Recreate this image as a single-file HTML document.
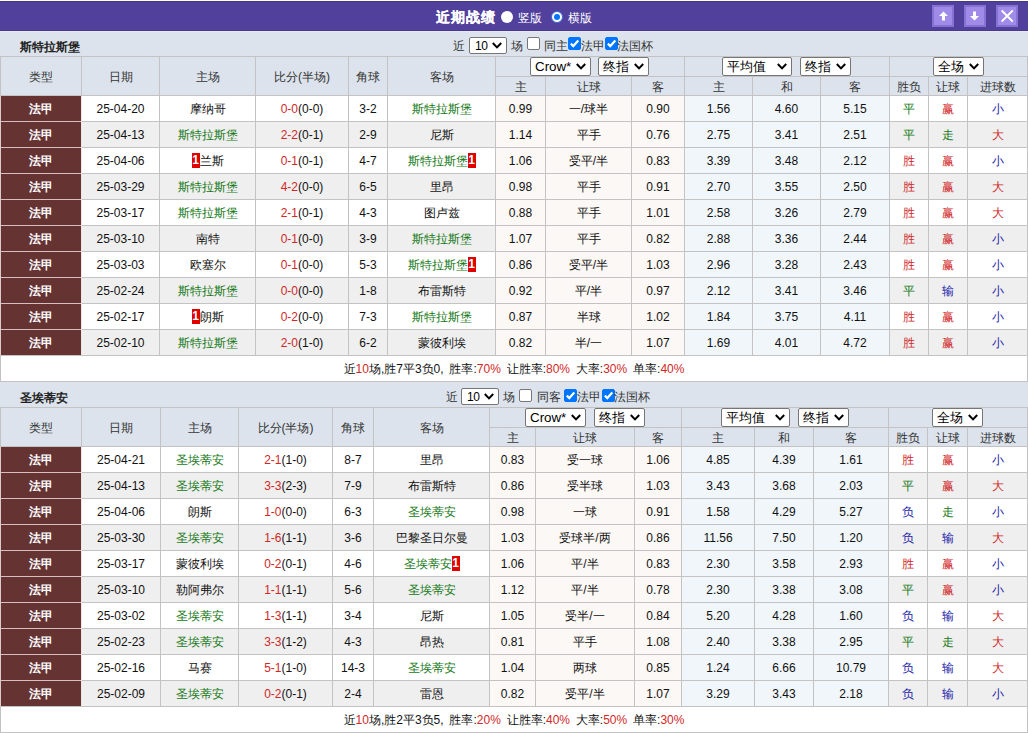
<!DOCTYPE html><html><head><meta charset="utf-8"><style>
*{margin:0;padding:0;box-sizing:border-box}
html,body{width:1028px;height:733px;overflow:hidden;background:#DCE3EC;font-family:"Liberation Sans",sans-serif;font-size:12px;color:#111}
div{position:absolute}
.t{text-align:center;white-space:nowrap;overflow:hidden}
.g{color:#167816} .r{color:#D02828} .b{color:#2222AA}
.bd{display:inline-block;background:#E00000;color:#fff;font-weight:bold;width:8px;height:15px;line-height:15px;text-align:center;vertical-align:middle;font-size:12px;position:relative;top:-1px}
.sel{background:#fff;border:1px solid #767676;border-radius:2px;font-size:13px;color:#000}
.sel .st{position:absolute;left:4px;top:0;line-height:17px;font-size:13.33px}
.sel .chev{position:absolute;top:5px}
.cb{width:13px;height:13px;border:1px solid #767676;border-radius:2px;background:#fff}
.cb.on{background:#0075FF;border-color:#0075FF}
.cb svg{position:absolute;left:-1px;top:-1px}
.tt{color:#fff;font-weight:bold;font-size:14px;line-height:14px;letter-spacing:1px;white-space:nowrap;-webkit-text-stroke:0.2px #fff}
.wt{color:#fff;font-size:12px;line-height:14px;white-space:nowrap}
.rad{width:12px;height:12px;border-radius:50%;background:#fff}
.rad.on{background:#fff;border:1px solid #3A6AE0}
.rad.on:after{content:"";position:absolute;left:2px;top:2px;width:6px;height:6px;border-radius:50%;background:#0075FF}
.btn{width:22px;height:22px;background:#A08CE8;border:2px solid #8672D4}

.team{font-weight:bold;font-size:12px;line-height:14px;color:#222;white-space:nowrap}
.lbl{font-size:12px;line-height:14px;color:#333;white-space:nowrap}
</style></head><body><div style="left:0px;top:0px;width:1028px;height:1px;background:#fff"></div>
<div style="left:0px;top:1px;width:1028px;height:1px;background:#463A7E"></div>
<div style="left:0px;top:2px;width:1028px;height:28px;background:#51409C"></div>
<div style="left:0px;top:30px;width:1028px;height:1px;background:#483B82"></div>
<div style="left:0px;top:31px;width:1028px;height:1px;background:#E6E6FA"></div>
<div class="tt" style="left:436px;top:10px;">近期战绩</div>
<div class="rad" style="left:501px;top:11px;"></div>
<div class="wt" style="left:518px;top:11px;">竖版</div>
<div class="rad on" style="left:551px;top:11px;"></div>
<div class="wt" style="left:568px;top:11px;">横版</div>
<div class="btn" style="left:932px;top:5px;"><svg width="11" height="11" viewBox="0 0 11 11" style="position:absolute;left:4px;top:3px;overflow:visible"><path d="M5.5 1.5 L10 6 L7 6 L7 10.5 L4 10.5 L4 6 L1 6 Z" fill="#fff"/></svg></div>
<div class="btn" style="left:964px;top:5px;"><svg width="11" height="11" viewBox="0 0 11 11" style="position:absolute;left:3px;top:3px;overflow:visible"><path d="M5.5 10.5 L10 6 L7 6 L7 1.5 L4 1.5 L4 6 L1 6 Z" fill="#fff"/></svg></div>
<div class="btn" style="left:996px;top:5px;"><svg width="11" height="11" viewBox="0 0 11 11" style="position:absolute;left:4px;top:3px;overflow:visible"><path d="M-0.3 0.5 L10.7 11.5 M10.7 0.5 L-0.3 11.5" stroke="#fff" stroke-width="1.8"/></svg></div>
<div class="team" style="left:20px;top:40px;">斯特拉斯堡</div>
<div style="left:0px;top:56px;width:1028px;height:39px;background:#DCE3EC"></div>
<div style="left:0px;top:56px;width:1028px;height:1px;background:#C3C3C3"></div>
<div style="left:495px;top:76px;width:532px;height:1px;background:#C3C3C3"></div>
<div style="left:0px;top:95px;width:1028px;height:1px;background:#C3C3C3"></div>
<div style="left:0px;top:56px;width:1px;height:39px;background:#C3C3C3"></div>
<div style="left:81px;top:56px;width:1px;height:39px;background:#C3C3C3"></div>
<div style="left:159px;top:56px;width:1px;height:39px;background:#C3C3C3"></div>
<div style="left:255px;top:56px;width:1px;height:39px;background:#C3C3C3"></div>
<div style="left:348px;top:56px;width:1px;height:39px;background:#C3C3C3"></div>
<div style="left:387px;top:56px;width:1px;height:39px;background:#C3C3C3"></div>
<div style="left:495px;top:56px;width:1px;height:39px;background:#C3C3C3"></div>
<div style="left:545px;top:76px;width:1px;height:19px;background:#C3C3C3"></div>
<div style="left:631px;top:76px;width:1px;height:19px;background:#C3C3C3"></div>
<div style="left:684px;top:56px;width:1px;height:39px;background:#C3C3C3"></div>
<div style="left:752px;top:76px;width:1px;height:19px;background:#C3C3C3"></div>
<div style="left:820px;top:76px;width:1px;height:19px;background:#C3C3C3"></div>
<div style="left:889px;top:56px;width:1px;height:39px;background:#C3C3C3"></div>
<div style="left:928px;top:76px;width:1px;height:19px;background:#C3C3C3"></div>
<div style="left:967px;top:76px;width:1px;height:19px;background:#C3C3C3"></div>
<div style="left:1027px;top:56px;width:1px;height:39px;background:#C3C3C3"></div>
<div class="t" style="left:1px;top:58px;width:80px;height:38px;line-height:38px;color:#333">类型</div>
<div class="t" style="left:82px;top:58px;width:77px;height:38px;line-height:38px;color:#333">日期</div>
<div class="t" style="left:160px;top:58px;width:95px;height:38px;line-height:38px;color:#333">主场</div>
<div class="t" style="left:256px;top:58px;width:92px;height:38px;line-height:38px;color:#333">比分(半场)</div>
<div class="t" style="left:349px;top:58px;width:38px;height:38px;line-height:38px;color:#333">角球</div>
<div class="t" style="left:388px;top:58px;width:107px;height:38px;line-height:38px;color:#333">客场</div>
<div class="t" style="left:496px;top:78px;width:49px;height:18px;line-height:18px;color:#333">主</div>
<div class="t" style="left:546px;top:78px;width:85px;height:18px;line-height:18px;color:#333">让球</div>
<div class="t" style="left:632px;top:78px;width:52px;height:18px;line-height:18px;color:#333">客</div>
<div class="t" style="left:685px;top:78px;width:67px;height:18px;line-height:18px;color:#333">主</div>
<div class="t" style="left:753px;top:78px;width:67px;height:18px;line-height:18px;color:#333">和</div>
<div class="t" style="left:821px;top:78px;width:68px;height:18px;line-height:18px;color:#333">客</div>
<div class="t" style="left:890px;top:78px;width:38px;height:18px;line-height:18px;color:#333">胜负</div>
<div class="t" style="left:929px;top:78px;width:38px;height:18px;line-height:18px;color:#333">让球</div>
<div class="t" style="left:968px;top:78px;width:59px;height:18px;line-height:18px;color:#333">进球数</div>
<div class="sel" style="left:530px;top:57px;width:61px;height:19px;"><span class="st">Crow*</span><svg class="chev" width="10" height="7" viewBox="0 0 10 7" style="left:45px"><path d="M0.8 1 L5 5.4 L9.2 1" stroke="#000" stroke-width="2" fill="none"/></svg></div>
<div class="sel" style="left:598px;top:57px;width:51px;height:19px;"><span class="st">终指</span><svg class="chev" width="10" height="7" viewBox="0 0 10 7" style="left:35px"><path d="M0.8 1 L5 5.4 L9.2 1" stroke="#000" stroke-width="2" fill="none"/></svg></div>
<div class="sel" style="left:722px;top:57px;width:70px;height:19px;"><span class="st">平均值</span><svg class="chev" width="10" height="7" viewBox="0 0 10 7" style="left:54px"><path d="M0.8 1 L5 5.4 L9.2 1" stroke="#000" stroke-width="2" fill="none"/></svg></div>
<div class="sel" style="left:800px;top:57px;width:51px;height:19px;"><span class="st">终指</span><svg class="chev" width="10" height="7" viewBox="0 0 10 7" style="left:35px"><path d="M0.8 1 L5 5.4 L9.2 1" stroke="#000" stroke-width="2" fill="none"/></svg></div>
<div class="sel" style="left:933px;top:57px;width:51px;height:19px;"><span class="st">全场</span><svg class="chev" width="10" height="7" viewBox="0 0 10 7" style="left:35px"><path d="M0.8 1 L5 5.4 L9.2 1" stroke="#000" stroke-width="2" fill="none"/></svg></div>
<div style="left:1px;top:96px;width:80px;height:25px;background:#663333"></div>
<div class="t" style="left:1px;top:97px;width:80px;height:25px;line-height:25px;color:#fff;font-weight:bold">法甲</div>
<div style="left:82px;top:96px;width:77px;height:25px;background:#FFFFFF"></div>
<div class="t" style="left:82px;top:97px;width:77px;height:25px;line-height:25px;">25-04-20</div>
<div style="left:160px;top:96px;width:95px;height:25px;background:#FFFFFF"></div>
<div class="t" style="left:160px;top:97px;width:95px;height:25px;line-height:25px;">摩纳哥</div>
<div style="left:256px;top:96px;width:92px;height:25px;background:#FFFFFF"></div>
<div class="t" style="left:256px;top:97px;width:92px;height:25px;line-height:25px;"><span class="r">0-0</span>(0-0)</div>
<div style="left:349px;top:96px;width:38px;height:25px;background:#FFFFFF"></div>
<div class="t" style="left:349px;top:97px;width:38px;height:25px;line-height:25px;">3-2</div>
<div style="left:388px;top:96px;width:107px;height:25px;background:#FFFFFF"></div>
<div class="t" style="left:388px;top:97px;width:107px;height:25px;line-height:25px;"><span class="g">斯特拉斯堡</span></div>
<div style="left:496px;top:96px;width:49px;height:25px;background:#FCF8F5"></div>
<div class="t" style="left:496px;top:97px;width:49px;height:25px;line-height:25px;">0.99</div>
<div style="left:546px;top:96px;width:85px;height:25px;background:#FCF8F5"></div>
<div class="t" style="left:546px;top:97px;width:85px;height:25px;line-height:25px;">一/球半</div>
<div style="left:632px;top:96px;width:52px;height:25px;background:#FCF8F5"></div>
<div class="t" style="left:632px;top:97px;width:52px;height:25px;line-height:25px;">0.90</div>
<div style="left:685px;top:96px;width:67px;height:25px;background:#F0F6FA"></div>
<div class="t" style="left:685px;top:97px;width:67px;height:25px;line-height:25px;">1.56</div>
<div style="left:753px;top:96px;width:67px;height:25px;background:#F0F6FA"></div>
<div class="t" style="left:753px;top:97px;width:67px;height:25px;line-height:25px;">4.60</div>
<div style="left:821px;top:96px;width:68px;height:25px;background:#F0F6FA"></div>
<div class="t" style="left:821px;top:97px;width:68px;height:25px;line-height:25px;">5.15</div>
<div style="left:890px;top:96px;width:38px;height:25px;background:#FFFFFF"></div>
<div class="t" style="left:890px;top:97px;width:38px;height:25px;line-height:25px;"><span class="g">平</span></div>
<div style="left:929px;top:96px;width:38px;height:25px;background:#FFFFFF"></div>
<div class="t" style="left:929px;top:97px;width:38px;height:25px;line-height:25px;"><span class="r">赢</span></div>
<div style="left:968px;top:96px;width:59px;height:25px;background:#FFFFFF"></div>
<div class="t" style="left:968px;top:97px;width:59px;height:25px;line-height:25px;"><span class="b">小</span></div>
<div style="left:0px;top:121px;width:1028px;height:1px;background:#C3C3C3"></div>
<div style="left:1px;top:122px;width:80px;height:25px;background:#663333"></div>
<div class="t" style="left:1px;top:123px;width:80px;height:25px;line-height:25px;color:#fff;font-weight:bold">法甲</div>
<div style="left:82px;top:122px;width:77px;height:25px;background:#EFEFEF"></div>
<div class="t" style="left:82px;top:123px;width:77px;height:25px;line-height:25px;">25-04-13</div>
<div style="left:160px;top:122px;width:95px;height:25px;background:#EFEFEF"></div>
<div class="t" style="left:160px;top:123px;width:95px;height:25px;line-height:25px;"><span class="g">斯特拉斯堡</span></div>
<div style="left:256px;top:122px;width:92px;height:25px;background:#EFEFEF"></div>
<div class="t" style="left:256px;top:123px;width:92px;height:25px;line-height:25px;"><span class="r">2-2</span>(0-1)</div>
<div style="left:349px;top:122px;width:38px;height:25px;background:#EFEFEF"></div>
<div class="t" style="left:349px;top:123px;width:38px;height:25px;line-height:25px;">2-9</div>
<div style="left:388px;top:122px;width:107px;height:25px;background:#EFEFEF"></div>
<div class="t" style="left:388px;top:123px;width:107px;height:25px;line-height:25px;">尼斯</div>
<div style="left:496px;top:122px;width:49px;height:25px;background:#FCF8F5"></div>
<div class="t" style="left:496px;top:123px;width:49px;height:25px;line-height:25px;">1.14</div>
<div style="left:546px;top:122px;width:85px;height:25px;background:#FCF8F5"></div>
<div class="t" style="left:546px;top:123px;width:85px;height:25px;line-height:25px;">平手</div>
<div style="left:632px;top:122px;width:52px;height:25px;background:#FCF8F5"></div>
<div class="t" style="left:632px;top:123px;width:52px;height:25px;line-height:25px;">0.76</div>
<div style="left:685px;top:122px;width:67px;height:25px;background:#F0F6FA"></div>
<div class="t" style="left:685px;top:123px;width:67px;height:25px;line-height:25px;">2.75</div>
<div style="left:753px;top:122px;width:67px;height:25px;background:#F0F6FA"></div>
<div class="t" style="left:753px;top:123px;width:67px;height:25px;line-height:25px;">3.41</div>
<div style="left:821px;top:122px;width:68px;height:25px;background:#F0F6FA"></div>
<div class="t" style="left:821px;top:123px;width:68px;height:25px;line-height:25px;">2.51</div>
<div style="left:890px;top:122px;width:38px;height:25px;background:#EFEFEF"></div>
<div class="t" style="left:890px;top:123px;width:38px;height:25px;line-height:25px;"><span class="g">平</span></div>
<div style="left:929px;top:122px;width:38px;height:25px;background:#EFEFEF"></div>
<div class="t" style="left:929px;top:123px;width:38px;height:25px;line-height:25px;"><span class="g">走</span></div>
<div style="left:968px;top:122px;width:59px;height:25px;background:#EFEFEF"></div>
<div class="t" style="left:968px;top:123px;width:59px;height:25px;line-height:25px;"><span class="r">大</span></div>
<div style="left:0px;top:147px;width:1028px;height:1px;background:#C3C3C3"></div>
<div style="left:1px;top:148px;width:80px;height:25px;background:#663333"></div>
<div class="t" style="left:1px;top:149px;width:80px;height:25px;line-height:25px;color:#fff;font-weight:bold">法甲</div>
<div style="left:82px;top:148px;width:77px;height:25px;background:#FFFFFF"></div>
<div class="t" style="left:82px;top:149px;width:77px;height:25px;line-height:25px;">25-04-06</div>
<div style="left:160px;top:148px;width:95px;height:25px;background:#FFFFFF"></div>
<div class="t" style="left:160px;top:149px;width:95px;height:25px;line-height:25px;"><span class="bd">1</span>兰斯</div>
<div style="left:256px;top:148px;width:92px;height:25px;background:#FFFFFF"></div>
<div class="t" style="left:256px;top:149px;width:92px;height:25px;line-height:25px;"><span class="r">0-1</span>(0-1)</div>
<div style="left:349px;top:148px;width:38px;height:25px;background:#FFFFFF"></div>
<div class="t" style="left:349px;top:149px;width:38px;height:25px;line-height:25px;">4-7</div>
<div style="left:388px;top:148px;width:107px;height:25px;background:#FFFFFF"></div>
<div class="t" style="left:388px;top:149px;width:107px;height:25px;line-height:25px;"><span class="g">斯特拉斯堡</span><span class="bd">1</span></div>
<div style="left:496px;top:148px;width:49px;height:25px;background:#FCF8F5"></div>
<div class="t" style="left:496px;top:149px;width:49px;height:25px;line-height:25px;">1.06</div>
<div style="left:546px;top:148px;width:85px;height:25px;background:#FCF8F5"></div>
<div class="t" style="left:546px;top:149px;width:85px;height:25px;line-height:25px;">受平/半</div>
<div style="left:632px;top:148px;width:52px;height:25px;background:#FCF8F5"></div>
<div class="t" style="left:632px;top:149px;width:52px;height:25px;line-height:25px;">0.83</div>
<div style="left:685px;top:148px;width:67px;height:25px;background:#F0F6FA"></div>
<div class="t" style="left:685px;top:149px;width:67px;height:25px;line-height:25px;">3.39</div>
<div style="left:753px;top:148px;width:67px;height:25px;background:#F0F6FA"></div>
<div class="t" style="left:753px;top:149px;width:67px;height:25px;line-height:25px;">3.48</div>
<div style="left:821px;top:148px;width:68px;height:25px;background:#F0F6FA"></div>
<div class="t" style="left:821px;top:149px;width:68px;height:25px;line-height:25px;">2.12</div>
<div style="left:890px;top:148px;width:38px;height:25px;background:#FFFFFF"></div>
<div class="t" style="left:890px;top:149px;width:38px;height:25px;line-height:25px;"><span class="r">胜</span></div>
<div style="left:929px;top:148px;width:38px;height:25px;background:#FFFFFF"></div>
<div class="t" style="left:929px;top:149px;width:38px;height:25px;line-height:25px;"><span class="r">赢</span></div>
<div style="left:968px;top:148px;width:59px;height:25px;background:#FFFFFF"></div>
<div class="t" style="left:968px;top:149px;width:59px;height:25px;line-height:25px;"><span class="b">小</span></div>
<div style="left:0px;top:173px;width:1028px;height:1px;background:#C3C3C3"></div>
<div style="left:1px;top:174px;width:80px;height:25px;background:#663333"></div>
<div class="t" style="left:1px;top:175px;width:80px;height:25px;line-height:25px;color:#fff;font-weight:bold">法甲</div>
<div style="left:82px;top:174px;width:77px;height:25px;background:#EFEFEF"></div>
<div class="t" style="left:82px;top:175px;width:77px;height:25px;line-height:25px;">25-03-29</div>
<div style="left:160px;top:174px;width:95px;height:25px;background:#EFEFEF"></div>
<div class="t" style="left:160px;top:175px;width:95px;height:25px;line-height:25px;"><span class="g">斯特拉斯堡</span></div>
<div style="left:256px;top:174px;width:92px;height:25px;background:#EFEFEF"></div>
<div class="t" style="left:256px;top:175px;width:92px;height:25px;line-height:25px;"><span class="r">4-2</span>(0-0)</div>
<div style="left:349px;top:174px;width:38px;height:25px;background:#EFEFEF"></div>
<div class="t" style="left:349px;top:175px;width:38px;height:25px;line-height:25px;">6-5</div>
<div style="left:388px;top:174px;width:107px;height:25px;background:#EFEFEF"></div>
<div class="t" style="left:388px;top:175px;width:107px;height:25px;line-height:25px;">里昂</div>
<div style="left:496px;top:174px;width:49px;height:25px;background:#FCF8F5"></div>
<div class="t" style="left:496px;top:175px;width:49px;height:25px;line-height:25px;">0.98</div>
<div style="left:546px;top:174px;width:85px;height:25px;background:#FCF8F5"></div>
<div class="t" style="left:546px;top:175px;width:85px;height:25px;line-height:25px;">平手</div>
<div style="left:632px;top:174px;width:52px;height:25px;background:#FCF8F5"></div>
<div class="t" style="left:632px;top:175px;width:52px;height:25px;line-height:25px;">0.91</div>
<div style="left:685px;top:174px;width:67px;height:25px;background:#F0F6FA"></div>
<div class="t" style="left:685px;top:175px;width:67px;height:25px;line-height:25px;">2.70</div>
<div style="left:753px;top:174px;width:67px;height:25px;background:#F0F6FA"></div>
<div class="t" style="left:753px;top:175px;width:67px;height:25px;line-height:25px;">3.55</div>
<div style="left:821px;top:174px;width:68px;height:25px;background:#F0F6FA"></div>
<div class="t" style="left:821px;top:175px;width:68px;height:25px;line-height:25px;">2.50</div>
<div style="left:890px;top:174px;width:38px;height:25px;background:#EFEFEF"></div>
<div class="t" style="left:890px;top:175px;width:38px;height:25px;line-height:25px;"><span class="r">胜</span></div>
<div style="left:929px;top:174px;width:38px;height:25px;background:#EFEFEF"></div>
<div class="t" style="left:929px;top:175px;width:38px;height:25px;line-height:25px;"><span class="r">赢</span></div>
<div style="left:968px;top:174px;width:59px;height:25px;background:#EFEFEF"></div>
<div class="t" style="left:968px;top:175px;width:59px;height:25px;line-height:25px;"><span class="r">大</span></div>
<div style="left:0px;top:199px;width:1028px;height:1px;background:#C3C3C3"></div>
<div style="left:1px;top:200px;width:80px;height:25px;background:#663333"></div>
<div class="t" style="left:1px;top:201px;width:80px;height:25px;line-height:25px;color:#fff;font-weight:bold">法甲</div>
<div style="left:82px;top:200px;width:77px;height:25px;background:#FFFFFF"></div>
<div class="t" style="left:82px;top:201px;width:77px;height:25px;line-height:25px;">25-03-17</div>
<div style="left:160px;top:200px;width:95px;height:25px;background:#FFFFFF"></div>
<div class="t" style="left:160px;top:201px;width:95px;height:25px;line-height:25px;"><span class="g">斯特拉斯堡</span></div>
<div style="left:256px;top:200px;width:92px;height:25px;background:#FFFFFF"></div>
<div class="t" style="left:256px;top:201px;width:92px;height:25px;line-height:25px;"><span class="r">2-1</span>(0-1)</div>
<div style="left:349px;top:200px;width:38px;height:25px;background:#FFFFFF"></div>
<div class="t" style="left:349px;top:201px;width:38px;height:25px;line-height:25px;">4-3</div>
<div style="left:388px;top:200px;width:107px;height:25px;background:#FFFFFF"></div>
<div class="t" style="left:388px;top:201px;width:107px;height:25px;line-height:25px;">图卢兹</div>
<div style="left:496px;top:200px;width:49px;height:25px;background:#FCF8F5"></div>
<div class="t" style="left:496px;top:201px;width:49px;height:25px;line-height:25px;">0.88</div>
<div style="left:546px;top:200px;width:85px;height:25px;background:#FCF8F5"></div>
<div class="t" style="left:546px;top:201px;width:85px;height:25px;line-height:25px;">平手</div>
<div style="left:632px;top:200px;width:52px;height:25px;background:#FCF8F5"></div>
<div class="t" style="left:632px;top:201px;width:52px;height:25px;line-height:25px;">1.01</div>
<div style="left:685px;top:200px;width:67px;height:25px;background:#F0F6FA"></div>
<div class="t" style="left:685px;top:201px;width:67px;height:25px;line-height:25px;">2.58</div>
<div style="left:753px;top:200px;width:67px;height:25px;background:#F0F6FA"></div>
<div class="t" style="left:753px;top:201px;width:67px;height:25px;line-height:25px;">3.26</div>
<div style="left:821px;top:200px;width:68px;height:25px;background:#F0F6FA"></div>
<div class="t" style="left:821px;top:201px;width:68px;height:25px;line-height:25px;">2.79</div>
<div style="left:890px;top:200px;width:38px;height:25px;background:#FFFFFF"></div>
<div class="t" style="left:890px;top:201px;width:38px;height:25px;line-height:25px;"><span class="r">胜</span></div>
<div style="left:929px;top:200px;width:38px;height:25px;background:#FFFFFF"></div>
<div class="t" style="left:929px;top:201px;width:38px;height:25px;line-height:25px;"><span class="r">赢</span></div>
<div style="left:968px;top:200px;width:59px;height:25px;background:#FFFFFF"></div>
<div class="t" style="left:968px;top:201px;width:59px;height:25px;line-height:25px;"><span class="r">大</span></div>
<div style="left:0px;top:225px;width:1028px;height:1px;background:#C3C3C3"></div>
<div style="left:1px;top:226px;width:80px;height:25px;background:#663333"></div>
<div class="t" style="left:1px;top:227px;width:80px;height:25px;line-height:25px;color:#fff;font-weight:bold">法甲</div>
<div style="left:82px;top:226px;width:77px;height:25px;background:#EFEFEF"></div>
<div class="t" style="left:82px;top:227px;width:77px;height:25px;line-height:25px;">25-03-10</div>
<div style="left:160px;top:226px;width:95px;height:25px;background:#EFEFEF"></div>
<div class="t" style="left:160px;top:227px;width:95px;height:25px;line-height:25px;">南特</div>
<div style="left:256px;top:226px;width:92px;height:25px;background:#EFEFEF"></div>
<div class="t" style="left:256px;top:227px;width:92px;height:25px;line-height:25px;"><span class="r">0-1</span>(0-0)</div>
<div style="left:349px;top:226px;width:38px;height:25px;background:#EFEFEF"></div>
<div class="t" style="left:349px;top:227px;width:38px;height:25px;line-height:25px;">3-9</div>
<div style="left:388px;top:226px;width:107px;height:25px;background:#EFEFEF"></div>
<div class="t" style="left:388px;top:227px;width:107px;height:25px;line-height:25px;"><span class="g">斯特拉斯堡</span></div>
<div style="left:496px;top:226px;width:49px;height:25px;background:#FCF8F5"></div>
<div class="t" style="left:496px;top:227px;width:49px;height:25px;line-height:25px;">1.07</div>
<div style="left:546px;top:226px;width:85px;height:25px;background:#FCF8F5"></div>
<div class="t" style="left:546px;top:227px;width:85px;height:25px;line-height:25px;">平手</div>
<div style="left:632px;top:226px;width:52px;height:25px;background:#FCF8F5"></div>
<div class="t" style="left:632px;top:227px;width:52px;height:25px;line-height:25px;">0.82</div>
<div style="left:685px;top:226px;width:67px;height:25px;background:#F0F6FA"></div>
<div class="t" style="left:685px;top:227px;width:67px;height:25px;line-height:25px;">2.88</div>
<div style="left:753px;top:226px;width:67px;height:25px;background:#F0F6FA"></div>
<div class="t" style="left:753px;top:227px;width:67px;height:25px;line-height:25px;">3.36</div>
<div style="left:821px;top:226px;width:68px;height:25px;background:#F0F6FA"></div>
<div class="t" style="left:821px;top:227px;width:68px;height:25px;line-height:25px;">2.44</div>
<div style="left:890px;top:226px;width:38px;height:25px;background:#EFEFEF"></div>
<div class="t" style="left:890px;top:227px;width:38px;height:25px;line-height:25px;"><span class="r">胜</span></div>
<div style="left:929px;top:226px;width:38px;height:25px;background:#EFEFEF"></div>
<div class="t" style="left:929px;top:227px;width:38px;height:25px;line-height:25px;"><span class="r">赢</span></div>
<div style="left:968px;top:226px;width:59px;height:25px;background:#EFEFEF"></div>
<div class="t" style="left:968px;top:227px;width:59px;height:25px;line-height:25px;"><span class="b">小</span></div>
<div style="left:0px;top:251px;width:1028px;height:1px;background:#C3C3C3"></div>
<div style="left:1px;top:252px;width:80px;height:25px;background:#663333"></div>
<div class="t" style="left:1px;top:253px;width:80px;height:25px;line-height:25px;color:#fff;font-weight:bold">法甲</div>
<div style="left:82px;top:252px;width:77px;height:25px;background:#FFFFFF"></div>
<div class="t" style="left:82px;top:253px;width:77px;height:25px;line-height:25px;">25-03-03</div>
<div style="left:160px;top:252px;width:95px;height:25px;background:#FFFFFF"></div>
<div class="t" style="left:160px;top:253px;width:95px;height:25px;line-height:25px;">欧塞尔</div>
<div style="left:256px;top:252px;width:92px;height:25px;background:#FFFFFF"></div>
<div class="t" style="left:256px;top:253px;width:92px;height:25px;line-height:25px;"><span class="r">0-1</span>(0-0)</div>
<div style="left:349px;top:252px;width:38px;height:25px;background:#FFFFFF"></div>
<div class="t" style="left:349px;top:253px;width:38px;height:25px;line-height:25px;">5-3</div>
<div style="left:388px;top:252px;width:107px;height:25px;background:#FFFFFF"></div>
<div class="t" style="left:388px;top:253px;width:107px;height:25px;line-height:25px;"><span class="g">斯特拉斯堡</span><span class="bd">1</span></div>
<div style="left:496px;top:252px;width:49px;height:25px;background:#FCF8F5"></div>
<div class="t" style="left:496px;top:253px;width:49px;height:25px;line-height:25px;">0.86</div>
<div style="left:546px;top:252px;width:85px;height:25px;background:#FCF8F5"></div>
<div class="t" style="left:546px;top:253px;width:85px;height:25px;line-height:25px;">受平/半</div>
<div style="left:632px;top:252px;width:52px;height:25px;background:#FCF8F5"></div>
<div class="t" style="left:632px;top:253px;width:52px;height:25px;line-height:25px;">1.03</div>
<div style="left:685px;top:252px;width:67px;height:25px;background:#F0F6FA"></div>
<div class="t" style="left:685px;top:253px;width:67px;height:25px;line-height:25px;">2.96</div>
<div style="left:753px;top:252px;width:67px;height:25px;background:#F0F6FA"></div>
<div class="t" style="left:753px;top:253px;width:67px;height:25px;line-height:25px;">3.28</div>
<div style="left:821px;top:252px;width:68px;height:25px;background:#F0F6FA"></div>
<div class="t" style="left:821px;top:253px;width:68px;height:25px;line-height:25px;">2.43</div>
<div style="left:890px;top:252px;width:38px;height:25px;background:#FFFFFF"></div>
<div class="t" style="left:890px;top:253px;width:38px;height:25px;line-height:25px;"><span class="r">胜</span></div>
<div style="left:929px;top:252px;width:38px;height:25px;background:#FFFFFF"></div>
<div class="t" style="left:929px;top:253px;width:38px;height:25px;line-height:25px;"><span class="r">赢</span></div>
<div style="left:968px;top:252px;width:59px;height:25px;background:#FFFFFF"></div>
<div class="t" style="left:968px;top:253px;width:59px;height:25px;line-height:25px;"><span class="b">小</span></div>
<div style="left:0px;top:277px;width:1028px;height:1px;background:#C3C3C3"></div>
<div style="left:1px;top:278px;width:80px;height:25px;background:#663333"></div>
<div class="t" style="left:1px;top:279px;width:80px;height:25px;line-height:25px;color:#fff;font-weight:bold">法甲</div>
<div style="left:82px;top:278px;width:77px;height:25px;background:#EFEFEF"></div>
<div class="t" style="left:82px;top:279px;width:77px;height:25px;line-height:25px;">25-02-24</div>
<div style="left:160px;top:278px;width:95px;height:25px;background:#EFEFEF"></div>
<div class="t" style="left:160px;top:279px;width:95px;height:25px;line-height:25px;"><span class="g">斯特拉斯堡</span></div>
<div style="left:256px;top:278px;width:92px;height:25px;background:#EFEFEF"></div>
<div class="t" style="left:256px;top:279px;width:92px;height:25px;line-height:25px;"><span class="r">0-0</span>(0-0)</div>
<div style="left:349px;top:278px;width:38px;height:25px;background:#EFEFEF"></div>
<div class="t" style="left:349px;top:279px;width:38px;height:25px;line-height:25px;">1-8</div>
<div style="left:388px;top:278px;width:107px;height:25px;background:#EFEFEF"></div>
<div class="t" style="left:388px;top:279px;width:107px;height:25px;line-height:25px;">布雷斯特</div>
<div style="left:496px;top:278px;width:49px;height:25px;background:#FCF8F5"></div>
<div class="t" style="left:496px;top:279px;width:49px;height:25px;line-height:25px;">0.92</div>
<div style="left:546px;top:278px;width:85px;height:25px;background:#FCF8F5"></div>
<div class="t" style="left:546px;top:279px;width:85px;height:25px;line-height:25px;">平/半</div>
<div style="left:632px;top:278px;width:52px;height:25px;background:#FCF8F5"></div>
<div class="t" style="left:632px;top:279px;width:52px;height:25px;line-height:25px;">0.97</div>
<div style="left:685px;top:278px;width:67px;height:25px;background:#F0F6FA"></div>
<div class="t" style="left:685px;top:279px;width:67px;height:25px;line-height:25px;">2.12</div>
<div style="left:753px;top:278px;width:67px;height:25px;background:#F0F6FA"></div>
<div class="t" style="left:753px;top:279px;width:67px;height:25px;line-height:25px;">3.41</div>
<div style="left:821px;top:278px;width:68px;height:25px;background:#F0F6FA"></div>
<div class="t" style="left:821px;top:279px;width:68px;height:25px;line-height:25px;">3.46</div>
<div style="left:890px;top:278px;width:38px;height:25px;background:#EFEFEF"></div>
<div class="t" style="left:890px;top:279px;width:38px;height:25px;line-height:25px;"><span class="g">平</span></div>
<div style="left:929px;top:278px;width:38px;height:25px;background:#EFEFEF"></div>
<div class="t" style="left:929px;top:279px;width:38px;height:25px;line-height:25px;"><span class="b">输</span></div>
<div style="left:968px;top:278px;width:59px;height:25px;background:#EFEFEF"></div>
<div class="t" style="left:968px;top:279px;width:59px;height:25px;line-height:25px;"><span class="b">小</span></div>
<div style="left:0px;top:303px;width:1028px;height:1px;background:#C3C3C3"></div>
<div style="left:1px;top:304px;width:80px;height:25px;background:#663333"></div>
<div class="t" style="left:1px;top:305px;width:80px;height:25px;line-height:25px;color:#fff;font-weight:bold">法甲</div>
<div style="left:82px;top:304px;width:77px;height:25px;background:#FFFFFF"></div>
<div class="t" style="left:82px;top:305px;width:77px;height:25px;line-height:25px;">25-02-17</div>
<div style="left:160px;top:304px;width:95px;height:25px;background:#FFFFFF"></div>
<div class="t" style="left:160px;top:305px;width:95px;height:25px;line-height:25px;"><span class="bd">1</span>朗斯</div>
<div style="left:256px;top:304px;width:92px;height:25px;background:#FFFFFF"></div>
<div class="t" style="left:256px;top:305px;width:92px;height:25px;line-height:25px;"><span class="r">0-2</span>(0-0)</div>
<div style="left:349px;top:304px;width:38px;height:25px;background:#FFFFFF"></div>
<div class="t" style="left:349px;top:305px;width:38px;height:25px;line-height:25px;">7-3</div>
<div style="left:388px;top:304px;width:107px;height:25px;background:#FFFFFF"></div>
<div class="t" style="left:388px;top:305px;width:107px;height:25px;line-height:25px;"><span class="g">斯特拉斯堡</span></div>
<div style="left:496px;top:304px;width:49px;height:25px;background:#FCF8F5"></div>
<div class="t" style="left:496px;top:305px;width:49px;height:25px;line-height:25px;">0.87</div>
<div style="left:546px;top:304px;width:85px;height:25px;background:#FCF8F5"></div>
<div class="t" style="left:546px;top:305px;width:85px;height:25px;line-height:25px;">半球</div>
<div style="left:632px;top:304px;width:52px;height:25px;background:#FCF8F5"></div>
<div class="t" style="left:632px;top:305px;width:52px;height:25px;line-height:25px;">1.02</div>
<div style="left:685px;top:304px;width:67px;height:25px;background:#F0F6FA"></div>
<div class="t" style="left:685px;top:305px;width:67px;height:25px;line-height:25px;">1.84</div>
<div style="left:753px;top:304px;width:67px;height:25px;background:#F0F6FA"></div>
<div class="t" style="left:753px;top:305px;width:67px;height:25px;line-height:25px;">3.75</div>
<div style="left:821px;top:304px;width:68px;height:25px;background:#F0F6FA"></div>
<div class="t" style="left:821px;top:305px;width:68px;height:25px;line-height:25px;">4.11</div>
<div style="left:890px;top:304px;width:38px;height:25px;background:#FFFFFF"></div>
<div class="t" style="left:890px;top:305px;width:38px;height:25px;line-height:25px;"><span class="r">胜</span></div>
<div style="left:929px;top:304px;width:38px;height:25px;background:#FFFFFF"></div>
<div class="t" style="left:929px;top:305px;width:38px;height:25px;line-height:25px;"><span class="r">赢</span></div>
<div style="left:968px;top:304px;width:59px;height:25px;background:#FFFFFF"></div>
<div class="t" style="left:968px;top:305px;width:59px;height:25px;line-height:25px;"><span class="b">小</span></div>
<div style="left:0px;top:329px;width:1028px;height:1px;background:#C3C3C3"></div>
<div style="left:1px;top:330px;width:80px;height:25px;background:#663333"></div>
<div class="t" style="left:1px;top:331px;width:80px;height:25px;line-height:25px;color:#fff;font-weight:bold">法甲</div>
<div style="left:82px;top:330px;width:77px;height:25px;background:#EFEFEF"></div>
<div class="t" style="left:82px;top:331px;width:77px;height:25px;line-height:25px;">25-02-10</div>
<div style="left:160px;top:330px;width:95px;height:25px;background:#EFEFEF"></div>
<div class="t" style="left:160px;top:331px;width:95px;height:25px;line-height:25px;"><span class="g">斯特拉斯堡</span></div>
<div style="left:256px;top:330px;width:92px;height:25px;background:#EFEFEF"></div>
<div class="t" style="left:256px;top:331px;width:92px;height:25px;line-height:25px;"><span class="r">2-0</span>(1-0)</div>
<div style="left:349px;top:330px;width:38px;height:25px;background:#EFEFEF"></div>
<div class="t" style="left:349px;top:331px;width:38px;height:25px;line-height:25px;">6-2</div>
<div style="left:388px;top:330px;width:107px;height:25px;background:#EFEFEF"></div>
<div class="t" style="left:388px;top:331px;width:107px;height:25px;line-height:25px;">蒙彼利埃</div>
<div style="left:496px;top:330px;width:49px;height:25px;background:#FCF8F5"></div>
<div class="t" style="left:496px;top:331px;width:49px;height:25px;line-height:25px;">0.82</div>
<div style="left:546px;top:330px;width:85px;height:25px;background:#FCF8F5"></div>
<div class="t" style="left:546px;top:331px;width:85px;height:25px;line-height:25px;">半/一</div>
<div style="left:632px;top:330px;width:52px;height:25px;background:#FCF8F5"></div>
<div class="t" style="left:632px;top:331px;width:52px;height:25px;line-height:25px;">1.07</div>
<div style="left:685px;top:330px;width:67px;height:25px;background:#F0F6FA"></div>
<div class="t" style="left:685px;top:331px;width:67px;height:25px;line-height:25px;">1.69</div>
<div style="left:753px;top:330px;width:67px;height:25px;background:#F0F6FA"></div>
<div class="t" style="left:753px;top:331px;width:67px;height:25px;line-height:25px;">4.01</div>
<div style="left:821px;top:330px;width:68px;height:25px;background:#F0F6FA"></div>
<div class="t" style="left:821px;top:331px;width:68px;height:25px;line-height:25px;">4.72</div>
<div style="left:890px;top:330px;width:38px;height:25px;background:#EFEFEF"></div>
<div class="t" style="left:890px;top:331px;width:38px;height:25px;line-height:25px;"><span class="r">胜</span></div>
<div style="left:929px;top:330px;width:38px;height:25px;background:#EFEFEF"></div>
<div class="t" style="left:929px;top:331px;width:38px;height:25px;line-height:25px;"><span class="r">赢</span></div>
<div style="left:968px;top:330px;width:59px;height:25px;background:#EFEFEF"></div>
<div class="t" style="left:968px;top:331px;width:59px;height:25px;line-height:25px;"><span class="b">小</span></div>
<div style="left:0px;top:355px;width:1028px;height:1px;background:#C3C3C3"></div>
<div style="left:0px;top:95px;width:1px;height:260px;background:#C3C3C3"></div>
<div style="left:81px;top:95px;width:1px;height:260px;background:#C3C3C3"></div>
<div style="left:159px;top:95px;width:1px;height:260px;background:#C3C3C3"></div>
<div style="left:255px;top:95px;width:1px;height:260px;background:#C3C3C3"></div>
<div style="left:348px;top:95px;width:1px;height:260px;background:#C3C3C3"></div>
<div style="left:387px;top:95px;width:1px;height:260px;background:#C3C3C3"></div>
<div style="left:495px;top:95px;width:1px;height:260px;background:#C3C3C3"></div>
<div style="left:545px;top:95px;width:1px;height:260px;background:#C3C3C3"></div>
<div style="left:631px;top:95px;width:1px;height:260px;background:#C3C3C3"></div>
<div style="left:684px;top:95px;width:1px;height:260px;background:#C3C3C3"></div>
<div style="left:752px;top:95px;width:1px;height:260px;background:#C3C3C3"></div>
<div style="left:820px;top:95px;width:1px;height:260px;background:#C3C3C3"></div>
<div style="left:889px;top:95px;width:1px;height:260px;background:#C3C3C3"></div>
<div style="left:928px;top:95px;width:1px;height:260px;background:#C3C3C3"></div>
<div style="left:967px;top:95px;width:1px;height:260px;background:#C3C3C3"></div>
<div style="left:1027px;top:95px;width:1px;height:260px;background:#C3C3C3"></div>
<div style="left:0px;top:121px;width:81px;height:1px;background:#D8BEBE"></div>
<div style="left:0px;top:147px;width:81px;height:1px;background:#D8BEBE"></div>
<div style="left:0px;top:173px;width:81px;height:1px;background:#D8BEBE"></div>
<div style="left:0px;top:199px;width:81px;height:1px;background:#D8BEBE"></div>
<div style="left:0px;top:225px;width:81px;height:1px;background:#D8BEBE"></div>
<div style="left:0px;top:251px;width:81px;height:1px;background:#D8BEBE"></div>
<div style="left:0px;top:277px;width:81px;height:1px;background:#D8BEBE"></div>
<div style="left:0px;top:303px;width:81px;height:1px;background:#D8BEBE"></div>
<div style="left:0px;top:329px;width:81px;height:1px;background:#D8BEBE"></div>
<div style="left:0px;top:96px;width:1px;height:259px;background:#DCCACA"></div>
<div style="left:81px;top:96px;width:1px;height:259px;background:#EEE4E4"></div>
<div style="left:1px;top:356px;width:1026px;height:25px;background:#fff"></div>
<div class="t" style="left:1px;top:357px;width:1026px;height:25px;line-height:25px;word-spacing:2.5px">近<span class="r">10</span>场,胜7平3负0, 胜率:<span class="r">70%</span> 让胜率:<span class="r">80%</span> 大率:<span class="r">30%</span> 单率:<span class="r">40%</span></div>
<div style="left:0px;top:355px;width:1px;height:27px;background:#C3C3C3"></div>
<div style="left:1027px;top:355px;width:1px;height:27px;background:#C3C3C3"></div>
<div style="left:0px;top:381px;width:1028px;height:1px;background:#C3C3C3"></div>
<div class="team" style="left:20px;top:391px;">圣埃蒂安</div>
<div style="left:0px;top:407px;width:1028px;height:39px;background:#DCE3EC"></div>
<div style="left:0px;top:407px;width:1028px;height:1px;background:#C3C3C3"></div>
<div style="left:489px;top:427px;width:538px;height:1px;background:#C3C3C3"></div>
<div style="left:0px;top:446px;width:1028px;height:1px;background:#C3C3C3"></div>
<div style="left:0px;top:407px;width:1px;height:39px;background:#C3C3C3"></div>
<div style="left:81px;top:407px;width:1px;height:39px;background:#C3C3C3"></div>
<div style="left:160px;top:407px;width:1px;height:39px;background:#C3C3C3"></div>
<div style="left:238px;top:407px;width:1px;height:39px;background:#C3C3C3"></div>
<div style="left:332px;top:407px;width:1px;height:39px;background:#C3C3C3"></div>
<div style="left:373px;top:407px;width:1px;height:39px;background:#C3C3C3"></div>
<div style="left:489px;top:407px;width:1px;height:39px;background:#C3C3C3"></div>
<div style="left:535px;top:427px;width:1px;height:19px;background:#C3C3C3"></div>
<div style="left:634px;top:427px;width:1px;height:19px;background:#C3C3C3"></div>
<div style="left:681px;top:407px;width:1px;height:39px;background:#C3C3C3"></div>
<div style="left:754px;top:427px;width:1px;height:19px;background:#C3C3C3"></div>
<div style="left:813px;top:427px;width:1px;height:19px;background:#C3C3C3"></div>
<div style="left:888px;top:407px;width:1px;height:39px;background:#C3C3C3"></div>
<div style="left:927px;top:427px;width:1px;height:19px;background:#C3C3C3"></div>
<div style="left:967px;top:427px;width:1px;height:19px;background:#C3C3C3"></div>
<div style="left:1027px;top:407px;width:1px;height:39px;background:#C3C3C3"></div>
<div class="t" style="left:1px;top:409px;width:80px;height:38px;line-height:38px;color:#333">类型</div>
<div class="t" style="left:82px;top:409px;width:78px;height:38px;line-height:38px;color:#333">日期</div>
<div class="t" style="left:161px;top:409px;width:77px;height:38px;line-height:38px;color:#333">主场</div>
<div class="t" style="left:239px;top:409px;width:93px;height:38px;line-height:38px;color:#333">比分(半场)</div>
<div class="t" style="left:333px;top:409px;width:40px;height:38px;line-height:38px;color:#333">角球</div>
<div class="t" style="left:374px;top:409px;width:115px;height:38px;line-height:38px;color:#333">客场</div>
<div class="t" style="left:490px;top:429px;width:45px;height:18px;line-height:18px;color:#333">主</div>
<div class="t" style="left:536px;top:429px;width:98px;height:18px;line-height:18px;color:#333">让球</div>
<div class="t" style="left:635px;top:429px;width:46px;height:18px;line-height:18px;color:#333">客</div>
<div class="t" style="left:682px;top:429px;width:72px;height:18px;line-height:18px;color:#333">主</div>
<div class="t" style="left:755px;top:429px;width:58px;height:18px;line-height:18px;color:#333">和</div>
<div class="t" style="left:814px;top:429px;width:74px;height:18px;line-height:18px;color:#333">客</div>
<div class="t" style="left:889px;top:429px;width:38px;height:18px;line-height:18px;color:#333">胜负</div>
<div class="t" style="left:928px;top:429px;width:39px;height:18px;line-height:18px;color:#333">让球</div>
<div class="t" style="left:968px;top:429px;width:59px;height:18px;line-height:18px;color:#333">进球数</div>
<div class="sel" style="left:525px;top:408px;width:61px;height:19px;"><span class="st">Crow*</span><svg class="chev" width="10" height="7" viewBox="0 0 10 7" style="left:45px"><path d="M0.8 1 L5 5.4 L9.2 1" stroke="#000" stroke-width="2" fill="none"/></svg></div>
<div class="sel" style="left:594px;top:408px;width:51px;height:19px;"><span class="st">终指</span><svg class="chev" width="10" height="7" viewBox="0 0 10 7" style="left:35px"><path d="M0.8 1 L5 5.4 L9.2 1" stroke="#000" stroke-width="2" fill="none"/></svg></div>
<div class="sel" style="left:721px;top:408px;width:69px;height:19px;"><span class="st">平均值</span><svg class="chev" width="10" height="7" viewBox="0 0 10 7" style="left:53px"><path d="M0.8 1 L5 5.4 L9.2 1" stroke="#000" stroke-width="2" fill="none"/></svg></div>
<div class="sel" style="left:798px;top:408px;width:51px;height:19px;"><span class="st">终指</span><svg class="chev" width="10" height="7" viewBox="0 0 10 7" style="left:35px"><path d="M0.8 1 L5 5.4 L9.2 1" stroke="#000" stroke-width="2" fill="none"/></svg></div>
<div class="sel" style="left:932px;top:408px;width:51px;height:19px;"><span class="st">全场</span><svg class="chev" width="10" height="7" viewBox="0 0 10 7" style="left:35px"><path d="M0.8 1 L5 5.4 L9.2 1" stroke="#000" stroke-width="2" fill="none"/></svg></div>
<div style="left:1px;top:447px;width:80px;height:25px;background:#663333"></div>
<div class="t" style="left:1px;top:448px;width:80px;height:25px;line-height:25px;color:#fff;font-weight:bold">法甲</div>
<div style="left:82px;top:447px;width:78px;height:25px;background:#FFFFFF"></div>
<div class="t" style="left:82px;top:448px;width:78px;height:25px;line-height:25px;">25-04-21</div>
<div style="left:161px;top:447px;width:77px;height:25px;background:#FFFFFF"></div>
<div class="t" style="left:161px;top:448px;width:77px;height:25px;line-height:25px;"><span class="g">圣埃蒂安</span></div>
<div style="left:239px;top:447px;width:93px;height:25px;background:#FFFFFF"></div>
<div class="t" style="left:239px;top:448px;width:93px;height:25px;line-height:25px;"><span class="r">2-1</span>(1-0)</div>
<div style="left:333px;top:447px;width:40px;height:25px;background:#FFFFFF"></div>
<div class="t" style="left:333px;top:448px;width:40px;height:25px;line-height:25px;">8-7</div>
<div style="left:374px;top:447px;width:115px;height:25px;background:#FFFFFF"></div>
<div class="t" style="left:374px;top:448px;width:115px;height:25px;line-height:25px;">里昂</div>
<div style="left:490px;top:447px;width:45px;height:25px;background:#FCF8F5"></div>
<div class="t" style="left:490px;top:448px;width:45px;height:25px;line-height:25px;">0.83</div>
<div style="left:536px;top:447px;width:98px;height:25px;background:#FCF8F5"></div>
<div class="t" style="left:536px;top:448px;width:98px;height:25px;line-height:25px;">受一球</div>
<div style="left:635px;top:447px;width:46px;height:25px;background:#FCF8F5"></div>
<div class="t" style="left:635px;top:448px;width:46px;height:25px;line-height:25px;">1.06</div>
<div style="left:682px;top:447px;width:72px;height:25px;background:#F0F6FA"></div>
<div class="t" style="left:682px;top:448px;width:72px;height:25px;line-height:25px;">4.85</div>
<div style="left:755px;top:447px;width:58px;height:25px;background:#F0F6FA"></div>
<div class="t" style="left:755px;top:448px;width:58px;height:25px;line-height:25px;">4.39</div>
<div style="left:814px;top:447px;width:74px;height:25px;background:#F0F6FA"></div>
<div class="t" style="left:814px;top:448px;width:74px;height:25px;line-height:25px;">1.61</div>
<div style="left:889px;top:447px;width:38px;height:25px;background:#FFFFFF"></div>
<div class="t" style="left:889px;top:448px;width:38px;height:25px;line-height:25px;"><span class="r">胜</span></div>
<div style="left:928px;top:447px;width:39px;height:25px;background:#FFFFFF"></div>
<div class="t" style="left:928px;top:448px;width:39px;height:25px;line-height:25px;"><span class="r">赢</span></div>
<div style="left:968px;top:447px;width:59px;height:25px;background:#FFFFFF"></div>
<div class="t" style="left:968px;top:448px;width:59px;height:25px;line-height:25px;"><span class="b">小</span></div>
<div style="left:0px;top:472px;width:1028px;height:1px;background:#C3C3C3"></div>
<div style="left:1px;top:473px;width:80px;height:25px;background:#663333"></div>
<div class="t" style="left:1px;top:474px;width:80px;height:25px;line-height:25px;color:#fff;font-weight:bold">法甲</div>
<div style="left:82px;top:473px;width:78px;height:25px;background:#EFEFEF"></div>
<div class="t" style="left:82px;top:474px;width:78px;height:25px;line-height:25px;">25-04-13</div>
<div style="left:161px;top:473px;width:77px;height:25px;background:#EFEFEF"></div>
<div class="t" style="left:161px;top:474px;width:77px;height:25px;line-height:25px;"><span class="g">圣埃蒂安</span></div>
<div style="left:239px;top:473px;width:93px;height:25px;background:#EFEFEF"></div>
<div class="t" style="left:239px;top:474px;width:93px;height:25px;line-height:25px;"><span class="r">3-3</span>(2-3)</div>
<div style="left:333px;top:473px;width:40px;height:25px;background:#EFEFEF"></div>
<div class="t" style="left:333px;top:474px;width:40px;height:25px;line-height:25px;">7-9</div>
<div style="left:374px;top:473px;width:115px;height:25px;background:#EFEFEF"></div>
<div class="t" style="left:374px;top:474px;width:115px;height:25px;line-height:25px;">布雷斯特</div>
<div style="left:490px;top:473px;width:45px;height:25px;background:#FCF8F5"></div>
<div class="t" style="left:490px;top:474px;width:45px;height:25px;line-height:25px;">0.86</div>
<div style="left:536px;top:473px;width:98px;height:25px;background:#FCF8F5"></div>
<div class="t" style="left:536px;top:474px;width:98px;height:25px;line-height:25px;">受半球</div>
<div style="left:635px;top:473px;width:46px;height:25px;background:#FCF8F5"></div>
<div class="t" style="left:635px;top:474px;width:46px;height:25px;line-height:25px;">1.03</div>
<div style="left:682px;top:473px;width:72px;height:25px;background:#F0F6FA"></div>
<div class="t" style="left:682px;top:474px;width:72px;height:25px;line-height:25px;">3.43</div>
<div style="left:755px;top:473px;width:58px;height:25px;background:#F0F6FA"></div>
<div class="t" style="left:755px;top:474px;width:58px;height:25px;line-height:25px;">3.68</div>
<div style="left:814px;top:473px;width:74px;height:25px;background:#F0F6FA"></div>
<div class="t" style="left:814px;top:474px;width:74px;height:25px;line-height:25px;">2.03</div>
<div style="left:889px;top:473px;width:38px;height:25px;background:#EFEFEF"></div>
<div class="t" style="left:889px;top:474px;width:38px;height:25px;line-height:25px;"><span class="g">平</span></div>
<div style="left:928px;top:473px;width:39px;height:25px;background:#EFEFEF"></div>
<div class="t" style="left:928px;top:474px;width:39px;height:25px;line-height:25px;"><span class="r">赢</span></div>
<div style="left:968px;top:473px;width:59px;height:25px;background:#EFEFEF"></div>
<div class="t" style="left:968px;top:474px;width:59px;height:25px;line-height:25px;"><span class="r">大</span></div>
<div style="left:0px;top:498px;width:1028px;height:1px;background:#C3C3C3"></div>
<div style="left:1px;top:499px;width:80px;height:25px;background:#663333"></div>
<div class="t" style="left:1px;top:500px;width:80px;height:25px;line-height:25px;color:#fff;font-weight:bold">法甲</div>
<div style="left:82px;top:499px;width:78px;height:25px;background:#FFFFFF"></div>
<div class="t" style="left:82px;top:500px;width:78px;height:25px;line-height:25px;">25-04-06</div>
<div style="left:161px;top:499px;width:77px;height:25px;background:#FFFFFF"></div>
<div class="t" style="left:161px;top:500px;width:77px;height:25px;line-height:25px;">朗斯</div>
<div style="left:239px;top:499px;width:93px;height:25px;background:#FFFFFF"></div>
<div class="t" style="left:239px;top:500px;width:93px;height:25px;line-height:25px;"><span class="r">1-0</span>(0-0)</div>
<div style="left:333px;top:499px;width:40px;height:25px;background:#FFFFFF"></div>
<div class="t" style="left:333px;top:500px;width:40px;height:25px;line-height:25px;">6-3</div>
<div style="left:374px;top:499px;width:115px;height:25px;background:#FFFFFF"></div>
<div class="t" style="left:374px;top:500px;width:115px;height:25px;line-height:25px;"><span class="g">圣埃蒂安</span></div>
<div style="left:490px;top:499px;width:45px;height:25px;background:#FCF8F5"></div>
<div class="t" style="left:490px;top:500px;width:45px;height:25px;line-height:25px;">0.98</div>
<div style="left:536px;top:499px;width:98px;height:25px;background:#FCF8F5"></div>
<div class="t" style="left:536px;top:500px;width:98px;height:25px;line-height:25px;">一球</div>
<div style="left:635px;top:499px;width:46px;height:25px;background:#FCF8F5"></div>
<div class="t" style="left:635px;top:500px;width:46px;height:25px;line-height:25px;">0.91</div>
<div style="left:682px;top:499px;width:72px;height:25px;background:#F0F6FA"></div>
<div class="t" style="left:682px;top:500px;width:72px;height:25px;line-height:25px;">1.58</div>
<div style="left:755px;top:499px;width:58px;height:25px;background:#F0F6FA"></div>
<div class="t" style="left:755px;top:500px;width:58px;height:25px;line-height:25px;">4.29</div>
<div style="left:814px;top:499px;width:74px;height:25px;background:#F0F6FA"></div>
<div class="t" style="left:814px;top:500px;width:74px;height:25px;line-height:25px;">5.27</div>
<div style="left:889px;top:499px;width:38px;height:25px;background:#FFFFFF"></div>
<div class="t" style="left:889px;top:500px;width:38px;height:25px;line-height:25px;"><span class="b">负</span></div>
<div style="left:928px;top:499px;width:39px;height:25px;background:#FFFFFF"></div>
<div class="t" style="left:928px;top:500px;width:39px;height:25px;line-height:25px;"><span class="g">走</span></div>
<div style="left:968px;top:499px;width:59px;height:25px;background:#FFFFFF"></div>
<div class="t" style="left:968px;top:500px;width:59px;height:25px;line-height:25px;"><span class="b">小</span></div>
<div style="left:0px;top:524px;width:1028px;height:1px;background:#C3C3C3"></div>
<div style="left:1px;top:525px;width:80px;height:25px;background:#663333"></div>
<div class="t" style="left:1px;top:526px;width:80px;height:25px;line-height:25px;color:#fff;font-weight:bold">法甲</div>
<div style="left:82px;top:525px;width:78px;height:25px;background:#EFEFEF"></div>
<div class="t" style="left:82px;top:526px;width:78px;height:25px;line-height:25px;">25-03-30</div>
<div style="left:161px;top:525px;width:77px;height:25px;background:#EFEFEF"></div>
<div class="t" style="left:161px;top:526px;width:77px;height:25px;line-height:25px;"><span class="g">圣埃蒂安</span></div>
<div style="left:239px;top:525px;width:93px;height:25px;background:#EFEFEF"></div>
<div class="t" style="left:239px;top:526px;width:93px;height:25px;line-height:25px;"><span class="r">1-6</span>(1-1)</div>
<div style="left:333px;top:525px;width:40px;height:25px;background:#EFEFEF"></div>
<div class="t" style="left:333px;top:526px;width:40px;height:25px;line-height:25px;">3-6</div>
<div style="left:374px;top:525px;width:115px;height:25px;background:#EFEFEF"></div>
<div class="t" style="left:374px;top:526px;width:115px;height:25px;line-height:25px;">巴黎圣日尔曼</div>
<div style="left:490px;top:525px;width:45px;height:25px;background:#FCF8F5"></div>
<div class="t" style="left:490px;top:526px;width:45px;height:25px;line-height:25px;">1.03</div>
<div style="left:536px;top:525px;width:98px;height:25px;background:#FCF8F5"></div>
<div class="t" style="left:536px;top:526px;width:98px;height:25px;line-height:25px;">受球半/两</div>
<div style="left:635px;top:525px;width:46px;height:25px;background:#FCF8F5"></div>
<div class="t" style="left:635px;top:526px;width:46px;height:25px;line-height:25px;">0.86</div>
<div style="left:682px;top:525px;width:72px;height:25px;background:#F0F6FA"></div>
<div class="t" style="left:682px;top:526px;width:72px;height:25px;line-height:25px;">11.56</div>
<div style="left:755px;top:525px;width:58px;height:25px;background:#F0F6FA"></div>
<div class="t" style="left:755px;top:526px;width:58px;height:25px;line-height:25px;">7.50</div>
<div style="left:814px;top:525px;width:74px;height:25px;background:#F0F6FA"></div>
<div class="t" style="left:814px;top:526px;width:74px;height:25px;line-height:25px;">1.20</div>
<div style="left:889px;top:525px;width:38px;height:25px;background:#EFEFEF"></div>
<div class="t" style="left:889px;top:526px;width:38px;height:25px;line-height:25px;"><span class="b">负</span></div>
<div style="left:928px;top:525px;width:39px;height:25px;background:#EFEFEF"></div>
<div class="t" style="left:928px;top:526px;width:39px;height:25px;line-height:25px;"><span class="b">输</span></div>
<div style="left:968px;top:525px;width:59px;height:25px;background:#EFEFEF"></div>
<div class="t" style="left:968px;top:526px;width:59px;height:25px;line-height:25px;"><span class="r">大</span></div>
<div style="left:0px;top:550px;width:1028px;height:1px;background:#C3C3C3"></div>
<div style="left:1px;top:551px;width:80px;height:25px;background:#663333"></div>
<div class="t" style="left:1px;top:552px;width:80px;height:25px;line-height:25px;color:#fff;font-weight:bold">法甲</div>
<div style="left:82px;top:551px;width:78px;height:25px;background:#FFFFFF"></div>
<div class="t" style="left:82px;top:552px;width:78px;height:25px;line-height:25px;">25-03-17</div>
<div style="left:161px;top:551px;width:77px;height:25px;background:#FFFFFF"></div>
<div class="t" style="left:161px;top:552px;width:77px;height:25px;line-height:25px;">蒙彼利埃</div>
<div style="left:239px;top:551px;width:93px;height:25px;background:#FFFFFF"></div>
<div class="t" style="left:239px;top:552px;width:93px;height:25px;line-height:25px;"><span class="r">0-2</span>(0-1)</div>
<div style="left:333px;top:551px;width:40px;height:25px;background:#FFFFFF"></div>
<div class="t" style="left:333px;top:552px;width:40px;height:25px;line-height:25px;">4-6</div>
<div style="left:374px;top:551px;width:115px;height:25px;background:#FFFFFF"></div>
<div class="t" style="left:374px;top:552px;width:115px;height:25px;line-height:25px;"><span class="g">圣埃蒂安</span><span class="bd">1</span></div>
<div style="left:490px;top:551px;width:45px;height:25px;background:#FCF8F5"></div>
<div class="t" style="left:490px;top:552px;width:45px;height:25px;line-height:25px;">1.06</div>
<div style="left:536px;top:551px;width:98px;height:25px;background:#FCF8F5"></div>
<div class="t" style="left:536px;top:552px;width:98px;height:25px;line-height:25px;">平/半</div>
<div style="left:635px;top:551px;width:46px;height:25px;background:#FCF8F5"></div>
<div class="t" style="left:635px;top:552px;width:46px;height:25px;line-height:25px;">0.83</div>
<div style="left:682px;top:551px;width:72px;height:25px;background:#F0F6FA"></div>
<div class="t" style="left:682px;top:552px;width:72px;height:25px;line-height:25px;">2.30</div>
<div style="left:755px;top:551px;width:58px;height:25px;background:#F0F6FA"></div>
<div class="t" style="left:755px;top:552px;width:58px;height:25px;line-height:25px;">3.58</div>
<div style="left:814px;top:551px;width:74px;height:25px;background:#F0F6FA"></div>
<div class="t" style="left:814px;top:552px;width:74px;height:25px;line-height:25px;">2.93</div>
<div style="left:889px;top:551px;width:38px;height:25px;background:#FFFFFF"></div>
<div class="t" style="left:889px;top:552px;width:38px;height:25px;line-height:25px;"><span class="r">胜</span></div>
<div style="left:928px;top:551px;width:39px;height:25px;background:#FFFFFF"></div>
<div class="t" style="left:928px;top:552px;width:39px;height:25px;line-height:25px;"><span class="r">赢</span></div>
<div style="left:968px;top:551px;width:59px;height:25px;background:#FFFFFF"></div>
<div class="t" style="left:968px;top:552px;width:59px;height:25px;line-height:25px;"><span class="b">小</span></div>
<div style="left:0px;top:576px;width:1028px;height:1px;background:#C3C3C3"></div>
<div style="left:1px;top:577px;width:80px;height:25px;background:#663333"></div>
<div class="t" style="left:1px;top:578px;width:80px;height:25px;line-height:25px;color:#fff;font-weight:bold">法甲</div>
<div style="left:82px;top:577px;width:78px;height:25px;background:#EFEFEF"></div>
<div class="t" style="left:82px;top:578px;width:78px;height:25px;line-height:25px;">25-03-10</div>
<div style="left:161px;top:577px;width:77px;height:25px;background:#EFEFEF"></div>
<div class="t" style="left:161px;top:578px;width:77px;height:25px;line-height:25px;">勒阿弗尔</div>
<div style="left:239px;top:577px;width:93px;height:25px;background:#EFEFEF"></div>
<div class="t" style="left:239px;top:578px;width:93px;height:25px;line-height:25px;"><span class="r">1-1</span>(1-1)</div>
<div style="left:333px;top:577px;width:40px;height:25px;background:#EFEFEF"></div>
<div class="t" style="left:333px;top:578px;width:40px;height:25px;line-height:25px;">5-6</div>
<div style="left:374px;top:577px;width:115px;height:25px;background:#EFEFEF"></div>
<div class="t" style="left:374px;top:578px;width:115px;height:25px;line-height:25px;"><span class="g">圣埃蒂安</span></div>
<div style="left:490px;top:577px;width:45px;height:25px;background:#FCF8F5"></div>
<div class="t" style="left:490px;top:578px;width:45px;height:25px;line-height:25px;">1.12</div>
<div style="left:536px;top:577px;width:98px;height:25px;background:#FCF8F5"></div>
<div class="t" style="left:536px;top:578px;width:98px;height:25px;line-height:25px;">平/半</div>
<div style="left:635px;top:577px;width:46px;height:25px;background:#FCF8F5"></div>
<div class="t" style="left:635px;top:578px;width:46px;height:25px;line-height:25px;">0.78</div>
<div style="left:682px;top:577px;width:72px;height:25px;background:#F0F6FA"></div>
<div class="t" style="left:682px;top:578px;width:72px;height:25px;line-height:25px;">2.30</div>
<div style="left:755px;top:577px;width:58px;height:25px;background:#F0F6FA"></div>
<div class="t" style="left:755px;top:578px;width:58px;height:25px;line-height:25px;">3.38</div>
<div style="left:814px;top:577px;width:74px;height:25px;background:#F0F6FA"></div>
<div class="t" style="left:814px;top:578px;width:74px;height:25px;line-height:25px;">3.08</div>
<div style="left:889px;top:577px;width:38px;height:25px;background:#EFEFEF"></div>
<div class="t" style="left:889px;top:578px;width:38px;height:25px;line-height:25px;"><span class="g">平</span></div>
<div style="left:928px;top:577px;width:39px;height:25px;background:#EFEFEF"></div>
<div class="t" style="left:928px;top:578px;width:39px;height:25px;line-height:25px;"><span class="r">赢</span></div>
<div style="left:968px;top:577px;width:59px;height:25px;background:#EFEFEF"></div>
<div class="t" style="left:968px;top:578px;width:59px;height:25px;line-height:25px;"><span class="b">小</span></div>
<div style="left:0px;top:602px;width:1028px;height:1px;background:#C3C3C3"></div>
<div style="left:1px;top:603px;width:80px;height:25px;background:#663333"></div>
<div class="t" style="left:1px;top:604px;width:80px;height:25px;line-height:25px;color:#fff;font-weight:bold">法甲</div>
<div style="left:82px;top:603px;width:78px;height:25px;background:#FFFFFF"></div>
<div class="t" style="left:82px;top:604px;width:78px;height:25px;line-height:25px;">25-03-02</div>
<div style="left:161px;top:603px;width:77px;height:25px;background:#FFFFFF"></div>
<div class="t" style="left:161px;top:604px;width:77px;height:25px;line-height:25px;"><span class="g">圣埃蒂安</span></div>
<div style="left:239px;top:603px;width:93px;height:25px;background:#FFFFFF"></div>
<div class="t" style="left:239px;top:604px;width:93px;height:25px;line-height:25px;"><span class="r">1-3</span>(1-1)</div>
<div style="left:333px;top:603px;width:40px;height:25px;background:#FFFFFF"></div>
<div class="t" style="left:333px;top:604px;width:40px;height:25px;line-height:25px;">3-4</div>
<div style="left:374px;top:603px;width:115px;height:25px;background:#FFFFFF"></div>
<div class="t" style="left:374px;top:604px;width:115px;height:25px;line-height:25px;">尼斯</div>
<div style="left:490px;top:603px;width:45px;height:25px;background:#FCF8F5"></div>
<div class="t" style="left:490px;top:604px;width:45px;height:25px;line-height:25px;">1.05</div>
<div style="left:536px;top:603px;width:98px;height:25px;background:#FCF8F5"></div>
<div class="t" style="left:536px;top:604px;width:98px;height:25px;line-height:25px;">受半/一</div>
<div style="left:635px;top:603px;width:46px;height:25px;background:#FCF8F5"></div>
<div class="t" style="left:635px;top:604px;width:46px;height:25px;line-height:25px;">0.84</div>
<div style="left:682px;top:603px;width:72px;height:25px;background:#F0F6FA"></div>
<div class="t" style="left:682px;top:604px;width:72px;height:25px;line-height:25px;">5.20</div>
<div style="left:755px;top:603px;width:58px;height:25px;background:#F0F6FA"></div>
<div class="t" style="left:755px;top:604px;width:58px;height:25px;line-height:25px;">4.28</div>
<div style="left:814px;top:603px;width:74px;height:25px;background:#F0F6FA"></div>
<div class="t" style="left:814px;top:604px;width:74px;height:25px;line-height:25px;">1.60</div>
<div style="left:889px;top:603px;width:38px;height:25px;background:#FFFFFF"></div>
<div class="t" style="left:889px;top:604px;width:38px;height:25px;line-height:25px;"><span class="b">负</span></div>
<div style="left:928px;top:603px;width:39px;height:25px;background:#FFFFFF"></div>
<div class="t" style="left:928px;top:604px;width:39px;height:25px;line-height:25px;"><span class="b">输</span></div>
<div style="left:968px;top:603px;width:59px;height:25px;background:#FFFFFF"></div>
<div class="t" style="left:968px;top:604px;width:59px;height:25px;line-height:25px;"><span class="r">大</span></div>
<div style="left:0px;top:628px;width:1028px;height:1px;background:#C3C3C3"></div>
<div style="left:1px;top:629px;width:80px;height:25px;background:#663333"></div>
<div class="t" style="left:1px;top:630px;width:80px;height:25px;line-height:25px;color:#fff;font-weight:bold">法甲</div>
<div style="left:82px;top:629px;width:78px;height:25px;background:#EFEFEF"></div>
<div class="t" style="left:82px;top:630px;width:78px;height:25px;line-height:25px;">25-02-23</div>
<div style="left:161px;top:629px;width:77px;height:25px;background:#EFEFEF"></div>
<div class="t" style="left:161px;top:630px;width:77px;height:25px;line-height:25px;"><span class="g">圣埃蒂安</span></div>
<div style="left:239px;top:629px;width:93px;height:25px;background:#EFEFEF"></div>
<div class="t" style="left:239px;top:630px;width:93px;height:25px;line-height:25px;"><span class="r">3-3</span>(1-2)</div>
<div style="left:333px;top:629px;width:40px;height:25px;background:#EFEFEF"></div>
<div class="t" style="left:333px;top:630px;width:40px;height:25px;line-height:25px;">4-3</div>
<div style="left:374px;top:629px;width:115px;height:25px;background:#EFEFEF"></div>
<div class="t" style="left:374px;top:630px;width:115px;height:25px;line-height:25px;">昂热</div>
<div style="left:490px;top:629px;width:45px;height:25px;background:#FCF8F5"></div>
<div class="t" style="left:490px;top:630px;width:45px;height:25px;line-height:25px;">0.81</div>
<div style="left:536px;top:629px;width:98px;height:25px;background:#FCF8F5"></div>
<div class="t" style="left:536px;top:630px;width:98px;height:25px;line-height:25px;">平手</div>
<div style="left:635px;top:629px;width:46px;height:25px;background:#FCF8F5"></div>
<div class="t" style="left:635px;top:630px;width:46px;height:25px;line-height:25px;">1.08</div>
<div style="left:682px;top:629px;width:72px;height:25px;background:#F0F6FA"></div>
<div class="t" style="left:682px;top:630px;width:72px;height:25px;line-height:25px;">2.40</div>
<div style="left:755px;top:629px;width:58px;height:25px;background:#F0F6FA"></div>
<div class="t" style="left:755px;top:630px;width:58px;height:25px;line-height:25px;">3.38</div>
<div style="left:814px;top:629px;width:74px;height:25px;background:#F0F6FA"></div>
<div class="t" style="left:814px;top:630px;width:74px;height:25px;line-height:25px;">2.95</div>
<div style="left:889px;top:629px;width:38px;height:25px;background:#EFEFEF"></div>
<div class="t" style="left:889px;top:630px;width:38px;height:25px;line-height:25px;"><span class="g">平</span></div>
<div style="left:928px;top:629px;width:39px;height:25px;background:#EFEFEF"></div>
<div class="t" style="left:928px;top:630px;width:39px;height:25px;line-height:25px;"><span class="g">走</span></div>
<div style="left:968px;top:629px;width:59px;height:25px;background:#EFEFEF"></div>
<div class="t" style="left:968px;top:630px;width:59px;height:25px;line-height:25px;"><span class="r">大</span></div>
<div style="left:0px;top:654px;width:1028px;height:1px;background:#C3C3C3"></div>
<div style="left:1px;top:655px;width:80px;height:25px;background:#663333"></div>
<div class="t" style="left:1px;top:656px;width:80px;height:25px;line-height:25px;color:#fff;font-weight:bold">法甲</div>
<div style="left:82px;top:655px;width:78px;height:25px;background:#FFFFFF"></div>
<div class="t" style="left:82px;top:656px;width:78px;height:25px;line-height:25px;">25-02-16</div>
<div style="left:161px;top:655px;width:77px;height:25px;background:#FFFFFF"></div>
<div class="t" style="left:161px;top:656px;width:77px;height:25px;line-height:25px;">马赛</div>
<div style="left:239px;top:655px;width:93px;height:25px;background:#FFFFFF"></div>
<div class="t" style="left:239px;top:656px;width:93px;height:25px;line-height:25px;"><span class="r">5-1</span>(1-0)</div>
<div style="left:333px;top:655px;width:40px;height:25px;background:#FFFFFF"></div>
<div class="t" style="left:333px;top:656px;width:40px;height:25px;line-height:25px;">14-3</div>
<div style="left:374px;top:655px;width:115px;height:25px;background:#FFFFFF"></div>
<div class="t" style="left:374px;top:656px;width:115px;height:25px;line-height:25px;"><span class="g">圣埃蒂安</span></div>
<div style="left:490px;top:655px;width:45px;height:25px;background:#FCF8F5"></div>
<div class="t" style="left:490px;top:656px;width:45px;height:25px;line-height:25px;">1.04</div>
<div style="left:536px;top:655px;width:98px;height:25px;background:#FCF8F5"></div>
<div class="t" style="left:536px;top:656px;width:98px;height:25px;line-height:25px;">两球</div>
<div style="left:635px;top:655px;width:46px;height:25px;background:#FCF8F5"></div>
<div class="t" style="left:635px;top:656px;width:46px;height:25px;line-height:25px;">0.85</div>
<div style="left:682px;top:655px;width:72px;height:25px;background:#F0F6FA"></div>
<div class="t" style="left:682px;top:656px;width:72px;height:25px;line-height:25px;">1.24</div>
<div style="left:755px;top:655px;width:58px;height:25px;background:#F0F6FA"></div>
<div class="t" style="left:755px;top:656px;width:58px;height:25px;line-height:25px;">6.66</div>
<div style="left:814px;top:655px;width:74px;height:25px;background:#F0F6FA"></div>
<div class="t" style="left:814px;top:656px;width:74px;height:25px;line-height:25px;">10.79</div>
<div style="left:889px;top:655px;width:38px;height:25px;background:#FFFFFF"></div>
<div class="t" style="left:889px;top:656px;width:38px;height:25px;line-height:25px;"><span class="b">负</span></div>
<div style="left:928px;top:655px;width:39px;height:25px;background:#FFFFFF"></div>
<div class="t" style="left:928px;top:656px;width:39px;height:25px;line-height:25px;"><span class="b">输</span></div>
<div style="left:968px;top:655px;width:59px;height:25px;background:#FFFFFF"></div>
<div class="t" style="left:968px;top:656px;width:59px;height:25px;line-height:25px;"><span class="r">大</span></div>
<div style="left:0px;top:680px;width:1028px;height:1px;background:#C3C3C3"></div>
<div style="left:1px;top:681px;width:80px;height:25px;background:#663333"></div>
<div class="t" style="left:1px;top:682px;width:80px;height:25px;line-height:25px;color:#fff;font-weight:bold">法甲</div>
<div style="left:82px;top:681px;width:78px;height:25px;background:#EFEFEF"></div>
<div class="t" style="left:82px;top:682px;width:78px;height:25px;line-height:25px;">25-02-09</div>
<div style="left:161px;top:681px;width:77px;height:25px;background:#EFEFEF"></div>
<div class="t" style="left:161px;top:682px;width:77px;height:25px;line-height:25px;"><span class="g">圣埃蒂安</span></div>
<div style="left:239px;top:681px;width:93px;height:25px;background:#EFEFEF"></div>
<div class="t" style="left:239px;top:682px;width:93px;height:25px;line-height:25px;"><span class="r">0-2</span>(0-1)</div>
<div style="left:333px;top:681px;width:40px;height:25px;background:#EFEFEF"></div>
<div class="t" style="left:333px;top:682px;width:40px;height:25px;line-height:25px;">2-4</div>
<div style="left:374px;top:681px;width:115px;height:25px;background:#EFEFEF"></div>
<div class="t" style="left:374px;top:682px;width:115px;height:25px;line-height:25px;">雷恩</div>
<div style="left:490px;top:681px;width:45px;height:25px;background:#FCF8F5"></div>
<div class="t" style="left:490px;top:682px;width:45px;height:25px;line-height:25px;">0.82</div>
<div style="left:536px;top:681px;width:98px;height:25px;background:#FCF8F5"></div>
<div class="t" style="left:536px;top:682px;width:98px;height:25px;line-height:25px;">受平/半</div>
<div style="left:635px;top:681px;width:46px;height:25px;background:#FCF8F5"></div>
<div class="t" style="left:635px;top:682px;width:46px;height:25px;line-height:25px;">1.07</div>
<div style="left:682px;top:681px;width:72px;height:25px;background:#F0F6FA"></div>
<div class="t" style="left:682px;top:682px;width:72px;height:25px;line-height:25px;">3.29</div>
<div style="left:755px;top:681px;width:58px;height:25px;background:#F0F6FA"></div>
<div class="t" style="left:755px;top:682px;width:58px;height:25px;line-height:25px;">3.43</div>
<div style="left:814px;top:681px;width:74px;height:25px;background:#F0F6FA"></div>
<div class="t" style="left:814px;top:682px;width:74px;height:25px;line-height:25px;">2.18</div>
<div style="left:889px;top:681px;width:38px;height:25px;background:#EFEFEF"></div>
<div class="t" style="left:889px;top:682px;width:38px;height:25px;line-height:25px;"><span class="b">负</span></div>
<div style="left:928px;top:681px;width:39px;height:25px;background:#EFEFEF"></div>
<div class="t" style="left:928px;top:682px;width:39px;height:25px;line-height:25px;"><span class="b">输</span></div>
<div style="left:968px;top:681px;width:59px;height:25px;background:#EFEFEF"></div>
<div class="t" style="left:968px;top:682px;width:59px;height:25px;line-height:25px;"><span class="b">小</span></div>
<div style="left:0px;top:706px;width:1028px;height:1px;background:#C3C3C3"></div>
<div style="left:0px;top:446px;width:1px;height:260px;background:#C3C3C3"></div>
<div style="left:81px;top:446px;width:1px;height:260px;background:#C3C3C3"></div>
<div style="left:160px;top:446px;width:1px;height:260px;background:#C3C3C3"></div>
<div style="left:238px;top:446px;width:1px;height:260px;background:#C3C3C3"></div>
<div style="left:332px;top:446px;width:1px;height:260px;background:#C3C3C3"></div>
<div style="left:373px;top:446px;width:1px;height:260px;background:#C3C3C3"></div>
<div style="left:489px;top:446px;width:1px;height:260px;background:#C3C3C3"></div>
<div style="left:535px;top:446px;width:1px;height:260px;background:#C3C3C3"></div>
<div style="left:634px;top:446px;width:1px;height:260px;background:#C3C3C3"></div>
<div style="left:681px;top:446px;width:1px;height:260px;background:#C3C3C3"></div>
<div style="left:754px;top:446px;width:1px;height:260px;background:#C3C3C3"></div>
<div style="left:813px;top:446px;width:1px;height:260px;background:#C3C3C3"></div>
<div style="left:888px;top:446px;width:1px;height:260px;background:#C3C3C3"></div>
<div style="left:927px;top:446px;width:1px;height:260px;background:#C3C3C3"></div>
<div style="left:967px;top:446px;width:1px;height:260px;background:#C3C3C3"></div>
<div style="left:1027px;top:446px;width:1px;height:260px;background:#C3C3C3"></div>
<div style="left:0px;top:472px;width:81px;height:1px;background:#D8BEBE"></div>
<div style="left:0px;top:498px;width:81px;height:1px;background:#D8BEBE"></div>
<div style="left:0px;top:524px;width:81px;height:1px;background:#D8BEBE"></div>
<div style="left:0px;top:550px;width:81px;height:1px;background:#D8BEBE"></div>
<div style="left:0px;top:576px;width:81px;height:1px;background:#D8BEBE"></div>
<div style="left:0px;top:602px;width:81px;height:1px;background:#D8BEBE"></div>
<div style="left:0px;top:628px;width:81px;height:1px;background:#D8BEBE"></div>
<div style="left:0px;top:654px;width:81px;height:1px;background:#D8BEBE"></div>
<div style="left:0px;top:680px;width:81px;height:1px;background:#D8BEBE"></div>
<div style="left:0px;top:447px;width:1px;height:259px;background:#DCCACA"></div>
<div style="left:81px;top:447px;width:1px;height:259px;background:#EEE4E4"></div>
<div style="left:1px;top:707px;width:1026px;height:25px;background:#fff"></div>
<div class="t" style="left:1px;top:708px;width:1026px;height:25px;line-height:25px;word-spacing:2.5px">近<span class="r">10</span>场,胜2平3负5, 胜率:<span class="r">20%</span> 让胜率:<span class="r">40%</span> 大率:<span class="r">50%</span> 单率:<span class="r">30%</span></div>
<div style="left:0px;top:706px;width:1px;height:27px;background:#C3C3C3"></div>
<div style="left:1027px;top:706px;width:1px;height:27px;background:#C3C3C3"></div>
<div style="left:0px;top:732px;width:1028px;height:1px;background:#C3C3C3"></div>
<div class="lbl" style="left:453px;top:39px;">近</div>
<div class="sel" style="left:469px;top:37px;width:38px;height:17px;"><span class="st" style="font-size:12px;left:5px;top:0px;line-height:17px;letter-spacing:-0.5px">10</span><svg class="chev" width="10" height="7" viewBox="0 0 10 7" style="top:4px;left:22px"><path d="M0.8 1 L5 5.4 L9.2 1" stroke="#000" stroke-width="2" fill="none"/></svg></div>
<div class="lbl" style="left:511px;top:39px;">场</div>
<div class="cb" style="left:527px;top:37px;"></div>
<div class="lbl" style="left:544px;top:39px;">同主</div>
<div class="cb on" style="left:568px;top:37px;"><svg width="13" height="13" viewBox="0 0 13 13"><path d="M2.8 6.6 L5.3 9.1 L10.3 3.6" stroke="#fff" stroke-width="2.2" fill="none"/></svg></div>
<div class="lbl" style="left:581px;top:39px;">法甲</div>
<div class="cb on" style="left:605px;top:37px;"><svg width="13" height="13" viewBox="0 0 13 13"><path d="M2.8 6.6 L5.3 9.1 L10.3 3.6" stroke="#fff" stroke-width="2.2" fill="none"/></svg></div>
<div class="lbl" style="left:617px;top:39px;">法国杯</div>
<div class="lbl" style="left:446px;top:390px;">近</div>
<div class="sel" style="left:461px;top:388px;width:38px;height:17px;"><span class="st" style="font-size:12px;left:5px;top:0px;line-height:17px;letter-spacing:-0.5px">10</span><svg class="chev" width="10" height="7" viewBox="0 0 10 7" style="top:4px;left:22px"><path d="M0.8 1 L5 5.4 L9.2 1" stroke="#000" stroke-width="2" fill="none"/></svg></div>
<div class="lbl" style="left:503px;top:390px;">场</div>
<div class="cb" style="left:519px;top:389px;"></div>
<div class="lbl" style="left:537px;top:390px;">同客</div>
<div class="cb on" style="left:564px;top:389px;"><svg width="13" height="13" viewBox="0 0 13 13"><path d="M2.8 6.6 L5.3 9.1 L10.3 3.6" stroke="#fff" stroke-width="2.2" fill="none"/></svg></div>
<div class="lbl" style="left:577px;top:390px;">法甲</div>
<div class="cb on" style="left:602px;top:389px;"><svg width="13" height="13" viewBox="0 0 13 13"><path d="M2.8 6.6 L5.3 9.1 L10.3 3.6" stroke="#fff" stroke-width="2.2" fill="none"/></svg></div>
<div class="lbl" style="left:614px;top:390px;">法国杯</div></body></html>
